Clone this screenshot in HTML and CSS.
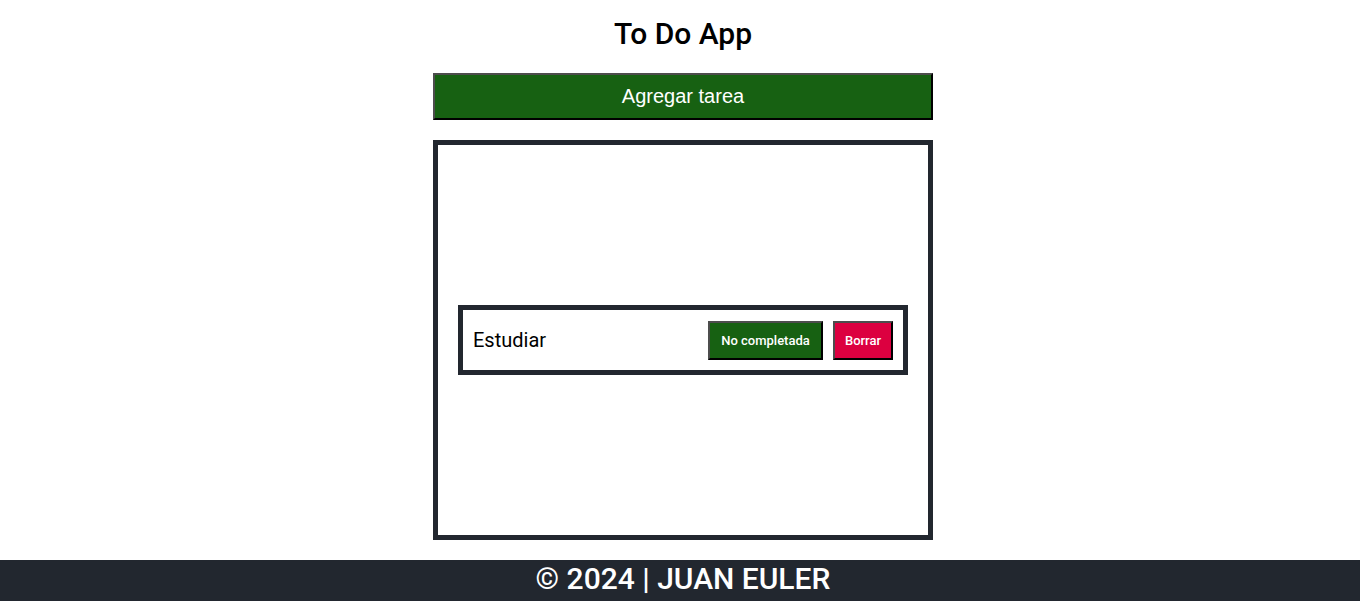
FILE: index.html
```html
<!DOCTYPE html>
<html lang="es">
<head>
<meta charset="utf-8">
<title>To Do App</title>
<link rel="stylesheet" href="styles.css">
</head>
<body>
<main class="app">
  <h1 class="title">To Do App</h1>
  <button class="add-btn">Agregar tarea</button>
  <section class="list">
    <div class="task">
      <span class="task-name">Estudiar</span>
      <div class="task-actions">
        <button class="btn btn-green">No completada</button>
        <button class="btn btn-red">Borrar</button>
      </div>
    </div>
  </section>
</main>
<footer class="footer">© 2024 | JUAN EULER</footer>
</body>
</html>
```
FILE: styles.css
```css
* { box-sizing: border-box; }
html, body { margin: 0; padding: 0; background: #fff; }
body {
  font-family: Roboto, "Liberation Sans", sans-serif;
  color: #000;
}
.app {
  display: flex;
  flex-direction: column;
  align-items: center;
  padding-top: 16px;
  padding-left: 6px;
}
.title {
  margin: 0;
  font-size: 30px;
  font-weight: 500;
  line-height: 36px;
}
.add-btn {
  margin-top: 21px;
  width: 500px;
  height: 47px;
  background: #176112;
  color: #fff;
  font-family: "Liberation Sans", Arial, sans-serif;
  font-size: 20px;
  border-width: 2px;
  border-style: solid;
  border-color: #4d4d4d #000 #000 #4d4d4d;
  padding: 0;
}
.list {
  margin-top: 20px;
  width: 500px;
  height: 400px;
  border: 5px solid #22272f;
  display: flex;
  align-items: center;
  padding: 0 20px;
}
.task {
  width: 100%;
  height: 70px;
  border: 5px solid #22272f;
  display: flex;
  align-items: center;
  justify-content: space-between;
  padding: 0 10px 0 10px;
}
.task-name {
  font-size: 20px;
}
.task-actions {
  display: flex;
  gap: 10px;
}
.btn {
  height: 39px;
  color: #fff;
  font-family: Roboto, "Liberation Sans", sans-serif;
  font-weight: 500;
  font-size: 13px;
  border-width: 2px;
  border-style: solid;
  border-color: #4d4d4d #000 #000 #4d4d4d;
  padding: 0;
}
.btn-green { background: #176112; width: 115px; }
.btn-red { background: #dc0040; width: 60px; }
.footer {
  margin-top: 20px;
  height: 41px;
  background: #22272f;
  color: #fff;
  text-align: center;
  font-size: 30px;
  font-weight: 500;
  line-height: 38px;
  padding-left: 6px;
}
```
